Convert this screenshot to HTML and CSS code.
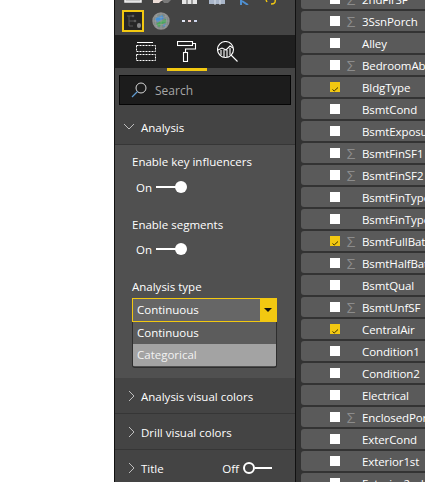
FILE: index.html
```html
<!DOCTYPE html>
<html lang="en">
<head>
    <meta charset="UTF-8">
    <meta name="viewport" content="width=device-width, initial-scale=1.0">
    <title>Visualizations and fields</title>
    <link rel="stylesheet" href="styles.css">
</head>
<body>
    <div class="blank"></div>

    <div class="panel">
        <div class="gallery">
            <div class="clipped-icons">
                <svg width="180" height="5" viewBox="0 0 180 5">
                    <rect x="10" y="-4" width="16" height="6" fill="#c8c8c8" stroke="#f0f0f0" stroke-width="1.5"/>
                    <path d="M38 3 L38 -2 L50 -2 L52 0 L46 1 L44 3 Z" fill="#ecdcd6"/>
                    <path d="M47 0 H56 L53 3 H49 Z" fill="#7a7a7a"/>
                    <rect x="67" y="-2" width="15" height="6" fill="#e6e6e6"/>
                    <path d="M72 0 V5 M77 0 V5" stroke="#555"/>
                    <rect x="94" y="-2" width="16" height="6" fill="#a9b6c9"/>
                    <path d="M100 0 V5 M105 0 V5" stroke="#d6dde8"/>
                    <path d="M126 -2 V5 M127 1 L133 5" stroke="#4f8fd0" stroke-width="2" fill="none"/>
                    <path d="M151 0 L152 2 M160 -1 C161 3 159 4 156 4" stroke="#f2c811" stroke-width="1.4" fill="none"/>
                </svg>
            </div>
            <div class="gallery-row">
                <div class="selected-visual">
                    <svg width="17" height="17" viewBox="0 0 17 17">
                        <path d="M2 3 H8 M4 8 H10 M4 13 H8 M4 3 V13" stroke="#565656" stroke-width="1" fill="none"/>
                        <circle cx="8" cy="3" r="1.3" fill="#5a5a5a"/>
                        <circle cx="10" cy="8" r="1.3" fill="#5a5a5a"/>
                        <rect x="12" y="10" width="4" height="5" rx="2" fill="#858585"/>
                    </svg>
                </div>
                <svg class="globe" width="18" height="18" viewBox="0 0 18 18">
                    <circle cx="9" cy="9" r="8" fill="#7d8a8a" stroke="#8f8f8f" stroke-width="1.4"/>
                    <path d="M3 7 C6 4 8 5 10 3 L12 6 L8 9 L5 10 Z" fill="#3f8fd6"/>
                    <path d="M4 12 L9 9 L14 7 L15 10 L10 12 L7 15 Z" fill="#4aa85a"/>
                    <path d="M11 13 L14 12 L12 15 Z" fill="#3f8fd6"/>
                    <path d="M1 9 H17 M9 1 V17 M3 4 C7 6 11 6 15 4 M3 14 C7 12 11 12 15 14 M5 2 C3 7 3 11 5 16 M13 2 C15 7 15 11 13 16" stroke="#a5a5a5" stroke-width=".5" fill="none"/>
                </svg>
                <div class="more-dots"><i class="dot-a"></i><i class="dot-b"></i><i class="dot-c"></i></div>
            </div>
        </div>

        <div class="tabs">
            <div class="tab">
                <svg width="22" height="20" viewBox="0 0 22 20" fill="none" stroke="#fff">
                    <path d="M1 .5 H17"/>
                    <rect x=".5" y="3.5" width="19" height="6" stroke-dasharray="2 1"/>
                    <rect x=".5" y="12.5" width="19" height="6" stroke-dasharray="2 1"/>
                </svg>
            </div>
            <div class="tab tab-active">
                <svg width="20" height="21" viewBox="0 0 20 21" fill="none" stroke="#fff" stroke-width="1.1">
                    <rect x=".5" y=".5" width="15" height="4"/>
                    <path d="M15.5 2.5 H18.5 V8 H8.5 V11"/>
                    <rect x="6.5" y="11.5" width="4" height="9"/>
                </svg>
            </div>
            <div class="tab">
                <svg width="21" height="21" viewBox="0 0 21 21" fill="none" stroke="#fff" stroke-width="1.1">
                    <circle cx="8.5" cy="8.5" r="8"/>
                    <path d="M14 14 L20.5 20.5"/>
                    <path d="M1 9 L5 7 L9 9 L13 5 L16 7"/>
                    <path d="M4 9 V14 M7 9 V16 M10 9 V16 M13 7 V14"/>
                </svg>
            </div>
        </div>

        <div class="search-wrap">
            <div class="search">
                <svg width="16" height="16" viewBox="0 0 16 16" fill="none">
                    <circle cx="10" cy="6" r="5" stroke="#d8d8d8"/>
                    <path d="M6.5 9.5 L1 15" stroke="#5f9bd1" stroke-width="1.2"/>
                </svg>
                <span>Search</span>
            </div>
        </div>

        <div class="section-head section-open">
            <svg class="chevron chevron-down" width="12" height="12" viewBox="0 0 12 12"><path d="M1 3 L6 8 L11 3"/></svg>
            <span>Analysis</span>
        </div>

        <div class="section-body">
            <div class="field-label">Enable key influencers</div>
            <div class="toggle">
                <span class="toggle-text">On</span>
                <i class="toggle-line"></i>
                <i class="toggle-knob"></i>
            </div>

            <div class="field-label">Enable segments</div>
            <div class="toggle toggle-tight">
                <span class="toggle-text">On</span>
                <i class="toggle-line"></i>
                <i class="toggle-knob"></i>
            </div>

            <div class="field-label">Analysis type</div>
            <div class="select">
                <span>Continuous</span>
                <div class="select-arrow"></div>
            </div>
            <div class="options">
                <div class="option">Continuous</div>
                <div class="option option-hover">Categorical</div>
            </div>
        </div>

        <div class="section-head">
            <svg class="chevron" width="12" height="12" viewBox="0 0 12 12"><path d="M3 1 L8 6 L3 11"/></svg>
            <span>Analysis visual colors</span>
        </div>
        <div class="section-head">
            <svg class="chevron" width="12" height="12" viewBox="0 0 12 12"><path d="M3 1 L8 6 L3 11"/></svg>
            <span>Drill visual colors</span>
        </div>
        <div class="section-head section-last">
            <svg class="chevron" width="12" height="12" viewBox="0 0 12 12"><path d="M3 1 L8 6 L3 11"/></svg>
            <span>Title</span>
            <div class="toggle-off">
                <span>Off</span>
                <i class="knob-off"></i>
                <i class="line-off"></i>
            </div>
        </div>
    </div>

    <div class="fields" id="fields"></div>

    <script>
        // name, has sigma, checked
        const fields = [
            ['2ndFlrSF', true, false],
            ['3SsnPorch', true, false],
            ['Alley', false, false],
            ['BedroomAbvGr', true, false],
            ['BldgType', false, true],
            ['BsmtCond', false, false],
            ['BsmtExposure', false, false],
            ['BsmtFinSF1', true, false],
            ['BsmtFinSF2', true, false],
            ['BsmtFinType1', false, false],
            ['BsmtFinType2', false, false],
            ['BsmtFullBath', true, true],
            ['BsmtHalfBath', true, false],
            ['BsmtQual', false, false],
            ['BsmtUnfSF', true, false],
            ['CentralAir', false, true],
            ['Condition1', false, false],
            ['Condition2', false, false],
            ['Electrical', false, false],
            ['EnclosedPorch', true, false],
            ['ExterCond', false, false],
            ['Exterior1st', false, false],
            ['Exterior2nd', false, false]
        ];

        const list = document.getElementById('fields');
        fields.forEach(([name, sigma, checked]) => {
            const row = document.createElement('div');
            row.className = 'field-row';
            const tick = checked
                ? '<svg width="10" height="10" viewBox="0 0 10 10"><path d="M2.5 5.5 L4.2 7 L8 3.5" stroke="#3a3000" fill="none"/></svg>'
                : '';
            row.innerHTML =
                `<div class="check${checked ? ' check-on' : ''}">${tick}</div>` +
                `<span class="sigma">${sigma ? 'Σ' : ''}</span>` +
                `<span class="field-name">${name}</span>`;
            list.appendChild(row);
        });
    </script>
</body>
</html>
```

FILE: styles.css
```css
body {
    margin: 0;
    display: flex;
    height: 482px;
    overflow: hidden;
    background: #fff;
    font-family: "Open Sans", "Noto Sans", sans-serif;
    font-size: 11.5px;
    color: #fff;
}
.blank {
    width: 114px;
    flex: none;
}

/* left pane */
.panel {
    width: 180px;
    flex: none;
    height: 482px;
    overflow: hidden;
    background: #444;
    border-left: 1px solid #111;
    border-right: 1px solid #111;
}
.gallery {
    height: 35px;
}
.clipped-icons {
    display: flex;
    height: 5px;
    overflow: hidden;
}
.gallery-row {
    display: flex;
    align-items: center;
    margin-top: 5px;
    padding-left: 7px;
}
.selected-visual {
    width: 18px;
    height: 18px;
    border: 2px solid #f2c811;
    background: #262626;
    display: flex;
    align-items: center;
    justify-content: center;
}
.globe {
    margin-left: 8px;
}
.more-dots {
    display: flex;
    gap: 3px;
    margin-left: 12px;
}
.more-dots i {
    width: 3px;
    height: 2px;
}
.dot-a {
    background: #dfe6f5;
}
.dot-b {
    background: #f0d0d0;
}
.dot-c {
    background: #d0d8f0;
}
.tabs {
    height: 33px;
    background: #1f1f1f;
    border-bottom: 3px solid #444;
    display: flex;
    padding-left: 12px;
}
.tab {
    width: 40px;
    height: 33px;
    display: flex;
    align-items: center;
    justify-content: center;
}
.tab-active {
    border-bottom: 3px solid #f2c811;
}
.search-wrap {
    padding: 4px 4px 0;
}
.search {
    height: 28px;
    background: #1c1c1c;
    border: 1px solid #050505;
    display: flex;
    align-items: center;
    gap: 8px;
    padding-left: 11px;
    color: #a6a6a6;
    font-size: 12px;
}
.section-head {
    height: 36px;
    box-sizing: border-box;
    padding: 1px 0 0 11px;
    display: flex;
    align-items: center;
    gap: 3px;
    border-bottom: 1px solid #363636;
}
.section-open {
    margin-top: 4px;
    padding-left: 8px;
    gap: 6px;
}
.section-last {
    border-bottom: 0;
    padding-top: 0;
}
.chevron {
    fill: none;
    stroke: #bdbdbd;
    stroke-width: 1;
}
.section-body {
    height: 233px;
    padding: 9px 0 0 17px;
    box-sizing: border-box;
    background: #505050;
}
.field-label {
    height: 16px;
    line-height: 16px;
}
.toggle {
    display: flex;
    align-items: center;
    margin: 9px 0 22px 4px;
    height: 16px;
}
.toggle-tight {
    margin-top: 8px;
}
.toggle-text {
    width: 20px;
}
.toggle-line {
    width: 20px;
    height: 2px;
    background: #fff;
}
.toggle-knob {
    width: 12px;
    height: 12px;
    border-radius: 50%;
    background: #fff;
    margin-left: -1px;
}
.select {
    width: 145px;
    height: 24px;
    box-sizing: border-box;
    margin-top: 3px;
    border: 1px solid #f2c811;
    background: #666;
    display: flex;
    align-items: center;
    justify-content: space-between;
    padding-left: 4px;
}
.select span {
    margin-top: -1px;
}
.select-arrow {
    width: 16px;
    height: 22px;
    background: #f2c811;
    position: relative;
}
.select-arrow::after {
    content: "";
    position: absolute;
    left: 4px;
    top: 9px;
    border-left: 4px solid transparent;
    border-right: 4px solid transparent;
    border-top: 4px solid #111;
}
.options {
    width: 145px;
    box-sizing: border-box;
    height: 46px;
    border: 1px solid #2e2e2e;
    border-top: 0;
    border-radius: 0 0 3px 3px;
    overflow: hidden;
}
.option {
    height: 22px;
    line-height: 22px;
    padding-left: 4px;
    background: #5c5c5c;
}
.option-hover {
    background: #a3a3a3;
    color: #f2f2f2;
}
.toggle-off {
    margin-left: auto;
    margin-right: 23px;
    display: flex;
    align-items: center;
}
.knob-off {
    width: 8px;
    height: 8px;
    border: 2px solid #fff;
    border-radius: 50%;
    margin-left: 4px;
}
.line-off {
    width: 17px;
    height: 2px;
    background: #fff;
}

/* right pane */
.fields {
    flex: 1;
    min-width: 0;
    height: 482px;
    overflow: hidden;
    background: #333;
    padding-left: 5px;
}
.field-row {
    height: 20px;
    margin-bottom: 2px;
    width: 140px;
    display: flex;
    align-items: center;
    background: #5a5a5a;
    border-radius: 3px;
    white-space: nowrap;
}
.field-row:first-child {
    margin-top: -11px;
}
.check {
    width: 10px;
    height: 10px;
    margin-left: 29px;
    background: #fff;
    flex: none;
}
.check-on {
    background: #f2c811;
}
.sigma {
    width: 22px;
    flex: none;
    text-align: center;
    color: #8c8c8c;
    font-size: 15px;
}
.field-name {
    font-size: 11.5px;
    letter-spacing: -0.1px;
}
```
